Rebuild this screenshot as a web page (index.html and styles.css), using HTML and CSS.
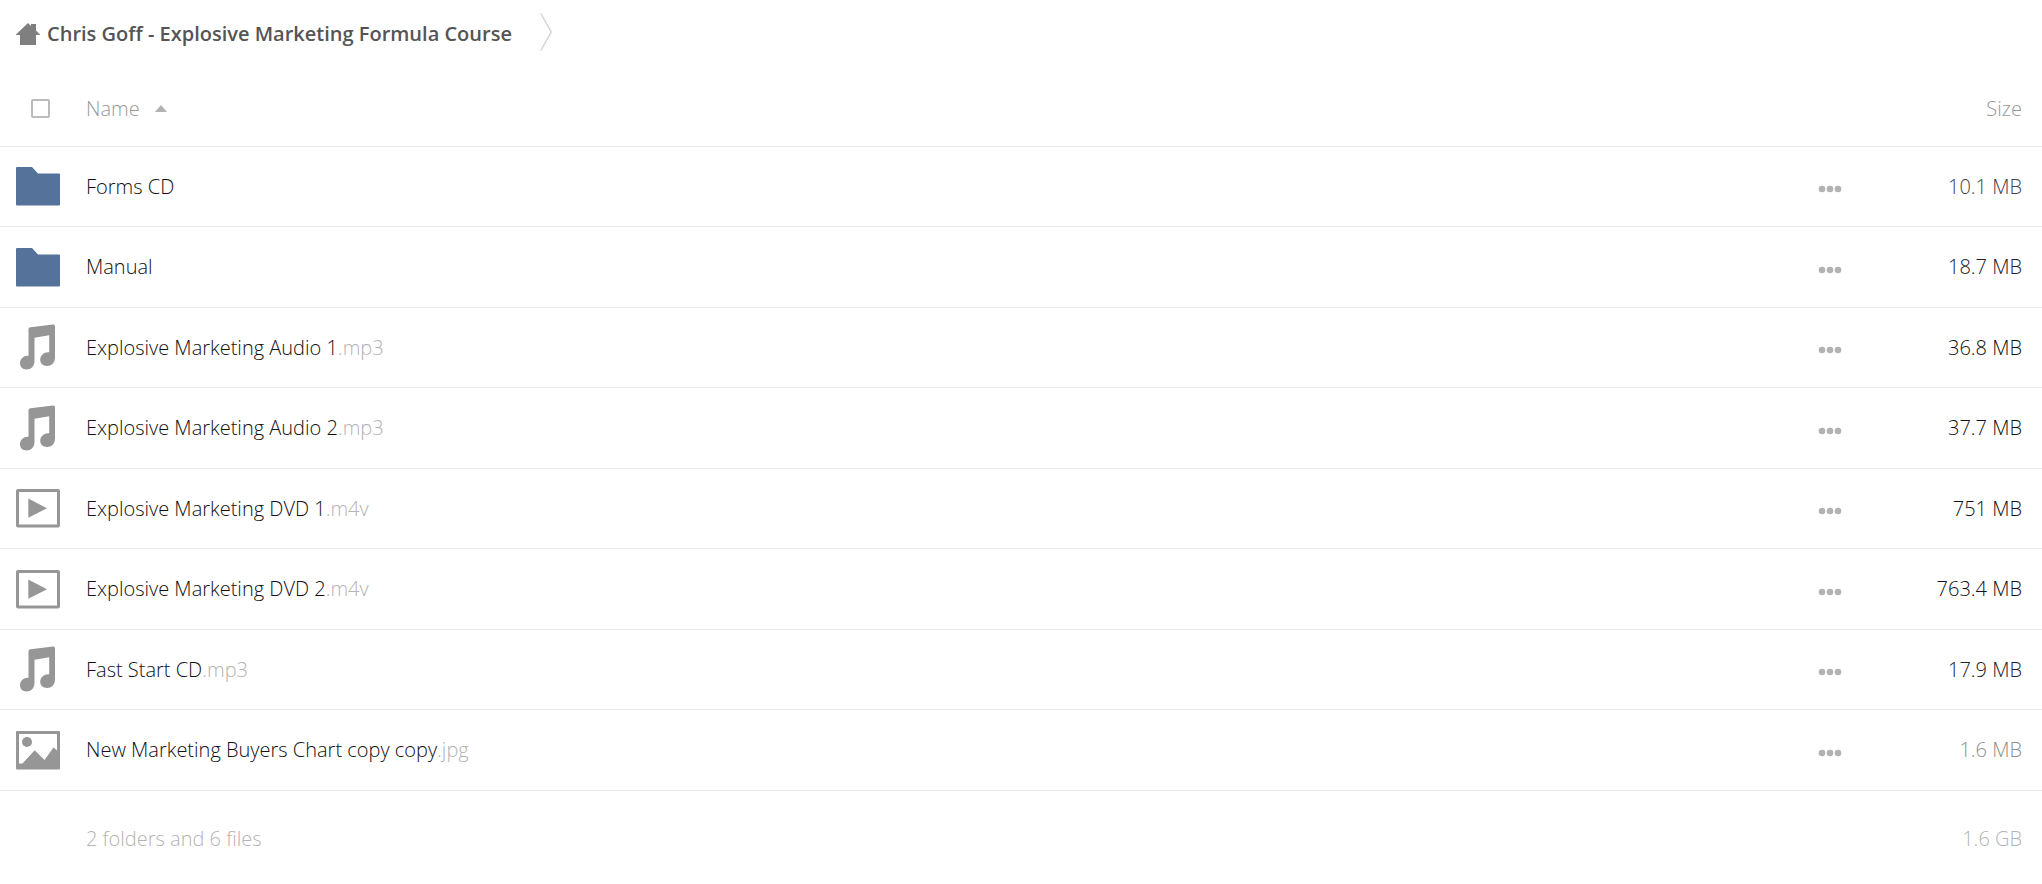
FILE: index.html
```html
<!DOCTYPE html>
<html lang="en">
<head>
    <meta charset="UTF-8">
    <meta name="viewport" content="width=device-width, initial-scale=1.0">
    <title>Chris Goff - Explosive Marketing Formula Course</title>
    <link rel="stylesheet" href="styles.css">
</head>
<body>
    <!-- shared icons -->
    <svg class="sprite" aria-hidden="true">
        <symbol id="icon-folder" viewBox="0 0 44 46">
            <path fill="#54729a" d="M1 4h15l6 6.500h21a1 1 0 0 1 1 1V41.500a1 1 0 0 1-1 1H1a1 1 0 0 1-1-1V5a1 1 0 0 1 1-1z"/>
        </symbol>
        <symbol id="icon-audio" viewBox="0 0 44 46">
            <path fill="#969696" d="M14.500 3.300 37 .5q2-.2 2 1.700V33.500c0 5-3.500 8.500-8 8.500-4 0-6.800-2.400-6.800-6.200 0-4.300 3.600-7.500 8-7.500h1V11.300L18.500 13.700V37c0 5-3.500 8.500-8 8.500C6.600 45.500 4 43 4 39.300c0-4.300 3.600-7.500 7.500-7.500h1V5.300q0-1.800 2-2z"/>
        </symbol>
        <symbol id="icon-video" viewBox="0 0 44 46">
            <rect x="1.500" y="5.500" width="41" height="35.500" rx="0.500" fill="none" stroke="#969696" stroke-width="3"/>
            <path fill="#969696" d="M12.300 13.500v19.300L31 23.200z"/>
        </symbol>
        <symbol id="icon-image" viewBox="0 0 44 46">
            <path fill="#969696" fill-rule="evenodd" d="M1 4h42a1 1 0 0 1 1 1v36.500a1 1 0 0 1-1 1H1a1 1 0 0 1-1-1V5a1 1 0 0 1 1-1zM3 7v29.500h3.500L18.700 23.200 28.500 33 37.500 20.500 41 23.500V7z"/>
            <circle cx="11" cy="15" r="5" fill="#969696"/>
        </symbol>
        <symbol id="icon-more" viewBox="0 0 24 8">
            <g fill="#b2b2b2">
                <circle cx="4" cy="4" r="3.300"/>
                <circle cx="12" cy="4" r="3.300"/>
                <circle cx="20" cy="4" r="3.300"/>
            </g>
        </symbol>
    </svg>

    <nav class="breadcrumb">
        <a href="#" class="crumb">
            <svg class="home" viewBox="0 0 24 22" aria-hidden="true">
                <path fill="#7f7f7f" d="M12 0l3 3V1h5v6.500l4 4v.5h-4v10H4V12H0v-.5z"/>
            </svg>
            <span>Chris Goff - Explosive Marketing Formula Course</span>
        </a>
        <svg class="separator" viewBox="0 0 12 38" aria-hidden="true">
            <path fill="none" stroke="#d0d0d0" stroke-width="1.300" d="M.7.300L11.200 19 .7 37.700"/>
        </svg>
    </nav>

    <table class="files">
        <thead>
            <tr>
                <th class="icon"><input type="checkbox" class="select-all" aria-label="Select all"></th>
                <th class="name"><button type="button" class="sort">Name <svg class="arrow" viewBox="0 0 12 7" aria-hidden="true"><path fill="#b2b2b2" d="M6 0l6 7H0z"/></svg></button></th>
                <th class="more"></th>
                <th class="size"><button type="button" class="sort">Size</button></th>
            </tr>
        </thead>
        <tbody>
            <tr>
                <td class="icon"><svg><use href="#icon-folder"/></svg></td>
                <td class="name"><a href="#">Forms CD</a></td>
                <td class="more"><button type="button" aria-label="Actions"><svg><use href="#icon-more"/></svg></button></td>
                <td class="size s-small">10.1 MB</td>
            </tr>
            <tr>
                <td class="icon"><svg><use href="#icon-folder"/></svg></td>
                <td class="name"><a href="#">Manual</a></td>
                <td class="more"><button type="button" aria-label="Actions"><svg><use href="#icon-more"/></svg></button></td>
                <td class="size s-medium">18.7 MB</td>
            </tr>
            <tr>
                <td class="icon"><svg><use href="#icon-audio"/></svg></td>
                <td class="name"><a href="#">Explosive Marketing Audio 1<span class="ext">.mp3</span></a></td>
                <td class="more"><button type="button" aria-label="Actions"><svg><use href="#icon-more"/></svg></button></td>
                <td class="size">36.8 MB</td>
            </tr>
            <tr>
                <td class="icon"><svg><use href="#icon-audio"/></svg></td>
                <td class="name"><a href="#">Explosive Marketing Audio 2<span class="ext">.mp3</span></a></td>
                <td class="more"><button type="button" aria-label="Actions"><svg><use href="#icon-more"/></svg></button></td>
                <td class="size">37.7 MB</td>
            </tr>
            <tr>
                <td class="icon"><svg><use href="#icon-video"/></svg></td>
                <td class="name"><a href="#">Explosive Marketing DVD 1<span class="ext">.m4v</span></a></td>
                <td class="more"><button type="button" aria-label="Actions"><svg><use href="#icon-more"/></svg></button></td>
                <td class="size">751 MB</td>
            </tr>
            <tr>
                <td class="icon"><svg><use href="#icon-video"/></svg></td>
                <td class="name"><a href="#">Explosive Marketing DVD 2<span class="ext">.m4v</span></a></td>
                <td class="more"><button type="button" aria-label="Actions"><svg><use href="#icon-more"/></svg></button></td>
                <td class="size">763.4 MB</td>
            </tr>
            <tr>
                <td class="icon"><svg><use href="#icon-audio"/></svg></td>
                <td class="name"><a href="#">Fast Start CD<span class="ext">.mp3</span></a></td>
                <td class="more"><button type="button" aria-label="Actions"><svg><use href="#icon-more"/></svg></button></td>
                <td class="size s-medium">17.9 MB</td>
            </tr>
            <tr>
                <td class="icon"><svg><use href="#icon-image"/></svg></td>
                <td class="name"><a href="#">New Marketing Buyers Chart copy copy<span class="ext">.jpg</span></a></td>
                <td class="more"><button type="button" aria-label="Actions"><svg><use href="#icon-more"/></svg></button></td>
                <td class="size s-tiny">1.6 MB</td>
            </tr>
        </tbody>
        <tfoot>
            <tr>
                <td class="icon"></td>
                <td class="name">2 folders and 6 files</td>
                <td class="more"></td>
                <td class="size">1.6 GB</td>
            </tr>
        </tfoot>
    </table>
</body>
</html>
```
FILE: styles.css
```css
* {
    box-sizing: border-box;
}
body {
    margin: 0;
    font-family: 'Open Sans', sans-serif;
    font-size: 20px;
    font-weight: 300;
    line-height: 28px;
    color: #111;
    background-color: #fff;
}
a {
    color: inherit;
    text-decoration: none;
}
button {
    padding: 0;
    border: none;
    background: none;
    font: inherit;
    color: inherit;
    cursor: pointer;
}
svg {
    display: block;
}
.sprite {
    position: absolute;
    width: 0;
    height: 0;
}

/* breadcrumb */
.breadcrumb {
    display: flex;
    align-items: center;
    gap: 28px;
    height: 71px;
    padding: 0 16px 4px;
}
.crumb {
    display: flex;
    align-items: center;
    gap: 7px;
    font-weight: 600;
    color: #555;
}
.home {
    width: 24px;
    height: 22px;
}
.separator {
    width: 12px;
    height: 38px;
    margin-bottom: 3px;
}

/* file list */
.files {
    width: 100%;
    border-collapse: separate;
    border-spacing: 0;
    table-layout: fixed;
}
.files th,
.files td {
    height: 80px;
    padding: 0;
    border-bottom: 1px solid #ebebeb;
    font-weight: 300;
    text-align: left;
    vertical-align: middle;
}
.files th {
    height: 76px;
    color: #999;
}
.files tbody tr:nth-child(even) td {
    height: 81px;
}
.files .icon {
    width: 86px;
    padding-left: 16px;
}
.files td.icon {
    padding-bottom: 1px;
}
.files td.icon svg {
    width: 44px;
    height: 46px;
}
.files .more {
    width: 110px;
}
.more button {
    display: block;
    padding-top: 5px;
}
.more svg {
    width: 24px;
    height: 8px;
}
.files .size {
    width: 114px;
    padding-right: 20px;
    text-align: right;
}
.ext {
    color: #b3b3b3;
}
.files .s-tiny {
    color: #8f8f8f;
}
.files .s-small {
    color: #444;
}
.files .s-medium {
    color: #222;
}
.sort {
    display: inline-flex;
    align-items: center;
    gap: 15px;
}
.arrow {
    width: 12px;
    height: 7px;
}
.select-all {
    display: block;
    appearance: none;
    width: 19px;
    height: 19px;
    margin: 0 0 0 15px;
    border: 2px solid #bbb;
    border-radius: 2px;
    background-color: #fff;
}
.files tfoot td {
    height: 96px;
    border-bottom: none;
    color: #b3b3b3;
}
```
